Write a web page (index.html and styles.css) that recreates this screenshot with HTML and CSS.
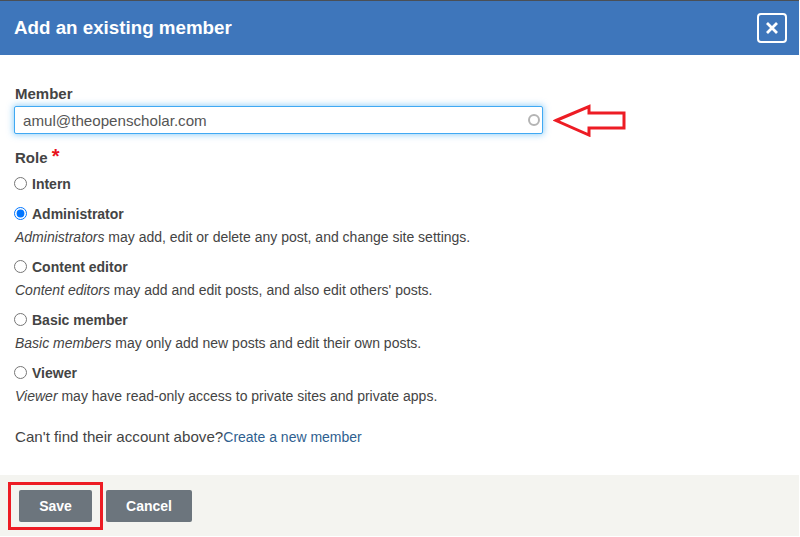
FILE: index.html
```html
<!DOCTYPE html>
<html lang="en">
<head>
<meta charset="utf-8">
<title>Add an existing member</title>
<link rel="stylesheet" href="styles.css">
</head>
<body>
<div class="dialog">
  <header class="titlebar">
    <h1 class="title">Add an existing member</h1>
    <button class="close" type="button" aria-label="Close">
      <svg width="14" height="14" viewBox="0 0 14 14"><path d="M2 2L12 12M12 2L2 12" stroke="#fff" stroke-width="2.800" fill="none"/></svg>
    </button>
  </header>
  <form class="body">
    <label class="field-label" for="member">Member</label>
    <div class="member-row">
      <div class="input-wrap">
        <input id="member" class="input" type="text" value="amul@theopenscholar.com">
        <span class="spinner"></span>
      </div>
      <svg class="callout-arrow" width="74" height="34" viewBox="0 0 74 34"><path d="M3 17.500L36 3.500V10H71V25H36V32Z" fill="#fff" stroke="#ed1c24" stroke-width="3" stroke-linejoin="miter"/></svg>
    </div>
    <div class="role-label">Role <span class="req">*</span></div>
    <div class="option first">
      <label class="radio-row"><input class="radio" type="radio" name="role"><span>Intern</span></label>
    </div>
    <div class="option">
      <label class="radio-row"><input class="radio" type="radio" name="role" checked><span>Administrator</span></label>
      <p class="desc"><em>Administrators</em> may add, edit or delete any post, and change site settings.</p>
    </div>
    <div class="option">
      <label class="radio-row"><input class="radio" type="radio" name="role"><span>Content editor</span></label>
      <p class="desc"><em>Content editors</em> may add and edit posts, and also edit others' posts.</p>
    </div>
    <div class="option">
      <label class="radio-row"><input class="radio" type="radio" name="role"><span>Basic member</span></label>
      <p class="desc"><em>Basic members</em> may only add new posts and edit their own posts.</p>
    </div>
    <div class="option">
      <label class="radio-row"><input class="radio" type="radio" name="role"><span>Viewer</span></label>
      <p class="desc"><em>Viewer</em> may have read-only access to private sites and private apps.</p>
    </div>
    <p class="find">Can't find their account above?<a class="link" href="#">Create a new member</a></p>
  </form>
  <footer class="actions">
    <div class="save-mark"><button class="btn" type="button">Save</button></div>
    <button class="btn cancel" type="button">Cancel</button>
  </footer>
</div>
</body>
</html>
```
FILE: styles.css
```css
* { box-sizing: border-box; }
html, body { margin: 0; padding: 0; background: #fff; }
body { width: 800px; height: 537px; overflow: hidden; font-family: "Liberation Sans", Arial, sans-serif; color: #444; }
.dialog { width: 799px; height: 536px; display: flex; flex-direction: column; background: #fff; }
.titlebar { height: 55px; flex: none; background: #3e76bb; border-top: 1px solid #4a4f55; display: flex; align-items: center; justify-content: space-between; padding: 0 12px 0 14px; }
.title { margin: 0; font-size: 18.750px; font-weight: bold; color: #fff; line-height: 24px; }
.close { width: 30px; height: 30px; padding: 0; background: transparent; border: 2px solid #fff; border-radius: 4px; display: flex; align-items: center; justify-content: center; }
.body { flex: 1; padding: 30px 14px 0 15px; margin: 0; font-size: 15px; }
.field-label { display: block; font-weight: bold; line-height: 18px; font-size: 15px; }
.member-row { display: flex; align-items: center; gap: 10px; }
.input-wrap { width: 529px; height: 28px; position: relative; flex: none; margin-left: -1px; }
.input { width: 100%; height: 100%; border: 1px solid #40a9f3; border-radius: 2px; box-shadow: 0 0 6px 1px rgba(64, 169, 243, .55); padding: 0 8px; font: 15.150px "Liberation Sans", Arial, sans-serif; color: #555; outline: none; background: #fff; }
.spinner { position: absolute; right: 3px; top: 8px; width: 12px; height: 12px; border: 2px solid #b4b4b4; border-radius: 50%; }
.callout-arrow { flex: none; }
.role-label { margin-top: 12px; font-weight: bold; line-height: 18px; }
.req { color: #e8121c; font-size: 20px; line-height: 14px; margin-left: 0; }
.option { margin-top: 12px; }
.option.first { margin-top: 8px; }
.radio-row { display: flex; align-items: center; font-weight: bold; font-size: 14px; line-height: 18px; }
.radio { width: 13px; height: 13px; margin: 0 5px 2px -1px; accent-color: #0075ff; flex: none; }
.desc { margin: 5px 0 0; font-size: 14px; line-height: 18px; color: #444; }
.find { margin: 23px 0 0; font-size: 15.150px; line-height: 18px; }
.link { color: #2f5f90; font-size: 14px; text-decoration: none; }
.actions { height: 61px; flex: none; background: #f4f4f0; display: flex; align-items: flex-start; gap: 14px; padding: 15px 0 0 19px; }
.save-mark { position: relative; display: flex; }
.save-mark::after { content: ""; position: absolute; inset: -8px -11px; border: 3px solid #ed1c24; pointer-events: none; }
.btn { height: 32px; min-width: 73px; padding: 0 20px; background: #6c757d; color: #fff; border: 0; border-radius: 2px; font: bold 14px "Liberation Sans", Arial, sans-serif; }
.cancel { width: 86px; }
```
